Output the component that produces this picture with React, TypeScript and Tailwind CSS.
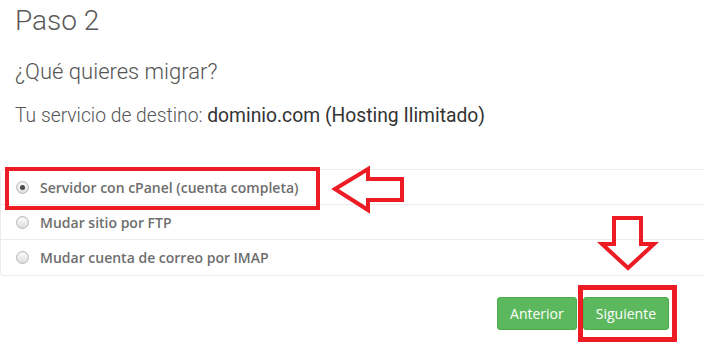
import React, { useState } from 'react';

type Option = { id: string; label: string };

const options: Option[] = [
  { id: 'cpanel', label: 'Servidor con cPanel (cuenta completa)' },
  { id: 'ftp', label: 'Mudar sitio por FTP' },
  { id: 'imap', label: 'Mudar cuenta de correo por IMAP' },
];

const Radio: React.FC<{ checked: boolean }> = ({ checked }) => (
  <span className="flex h-[13px] w-[13px] items-center justify-center rounded-full border border-[#b8b8b8] bg-gradient-to-b from-[#ffffff] to-[#dcdcdc] shadow-[inset_0_1px_1px_rgba(0,0,0,0.08)]">
    {checked && <span className="h-[5px] w-[5px] rounded-full bg-[#4a4a4a]" />}
  </span>
);

export default function App() {
  const [selected, setSelected] = useState('cpanel');

  return (
    <div className="relative h-[351px] w-[704px] overflow-hidden bg-white font-['Roboto',sans-serif]">
      {/* Heading */}
      <div className="px-[15px]">
        <h1 className="mt-[5px] text-[28px] font-light leading-[31px] text-[#5a5a5a]">Paso 2</h1>
        <h2 className="mt-[24px] text-[22px] font-light leading-[24px] text-[#555]">¿Qué quieres migrar?</h2>
        <p className="mt-[21px] text-[19.3px] font-light leading-[22px] text-[#555]">
          Tu servicio de destino: <span className="font-normal text-[#333]">dominio.com (Hosting Ilimitado)</span>
        </p>
      </div>

      {/* Options list */}
      <div className="mt-[42px] rounded-l-[4px] border-y border-l border-[#ececec] font-['Open_Sans',sans-serif]">
        {options.map((opt, i) => (
          <div
            key={opt.id}
            onClick={() => setSelected(opt.id)}
            className={`flex h-[35px] cursor-pointer items-center gap-[11px] pl-[15px] ${i < options.length - 1 ? 'border-b border-[#ececec]' : ''}`}
          >
            <Radio checked={selected === opt.id} />
            <span className="text-[14px] font-semibold text-[#6e6e6e]">{opt.label}</span>
          </div>
        ))}
      </div>

      {/* Buttons */}
      <div className="mt-[21px] flex justify-end gap-[6px] pr-[35px] font-['Open_Sans',sans-serif]">
        <button className="h-[33px] rounded-[3px] border border-[#4cae4c] bg-[#5cb85c] px-[12px] text-[14px] text-white">
          Anterior
        </button>
        <button className="h-[33px] rounded-[3px] border border-[#4cae4c] bg-[#5cb85c] px-[12px] text-[14px] text-white">
          Siguiente
        </button>
      </div>

      {/* Red annotations */}
      <div className="pointer-events-none absolute left-[5px] top-[167px] h-[43px] w-[315px] border-[4px] border-[#ed1c24]" />
      <div className="pointer-events-none absolute left-[578px] top-[285px] h-[57px] w-[99px] border-[5px] border-[#ed1c24]" />

      <svg className="pointer-events-none absolute left-0 top-0" width="704" height="351" viewBox="0 0 704 351">
        <polygon
          points="335,189 368,169 368,179 402,179 402,200 368,200 368,210"
          fill="none"
          stroke="#ed1c24"
          strokeWidth="4"
          strokeLinejoin="miter"
        />
        <polygon
          points="614,218 641,218 641,244 654,244 628,268 602,244 614,244"
          fill="none"
          stroke="#ed1c24"
          strokeWidth="4"
          strokeLinejoin="miter"
        />
      </svg>
    </div>
  );
}
